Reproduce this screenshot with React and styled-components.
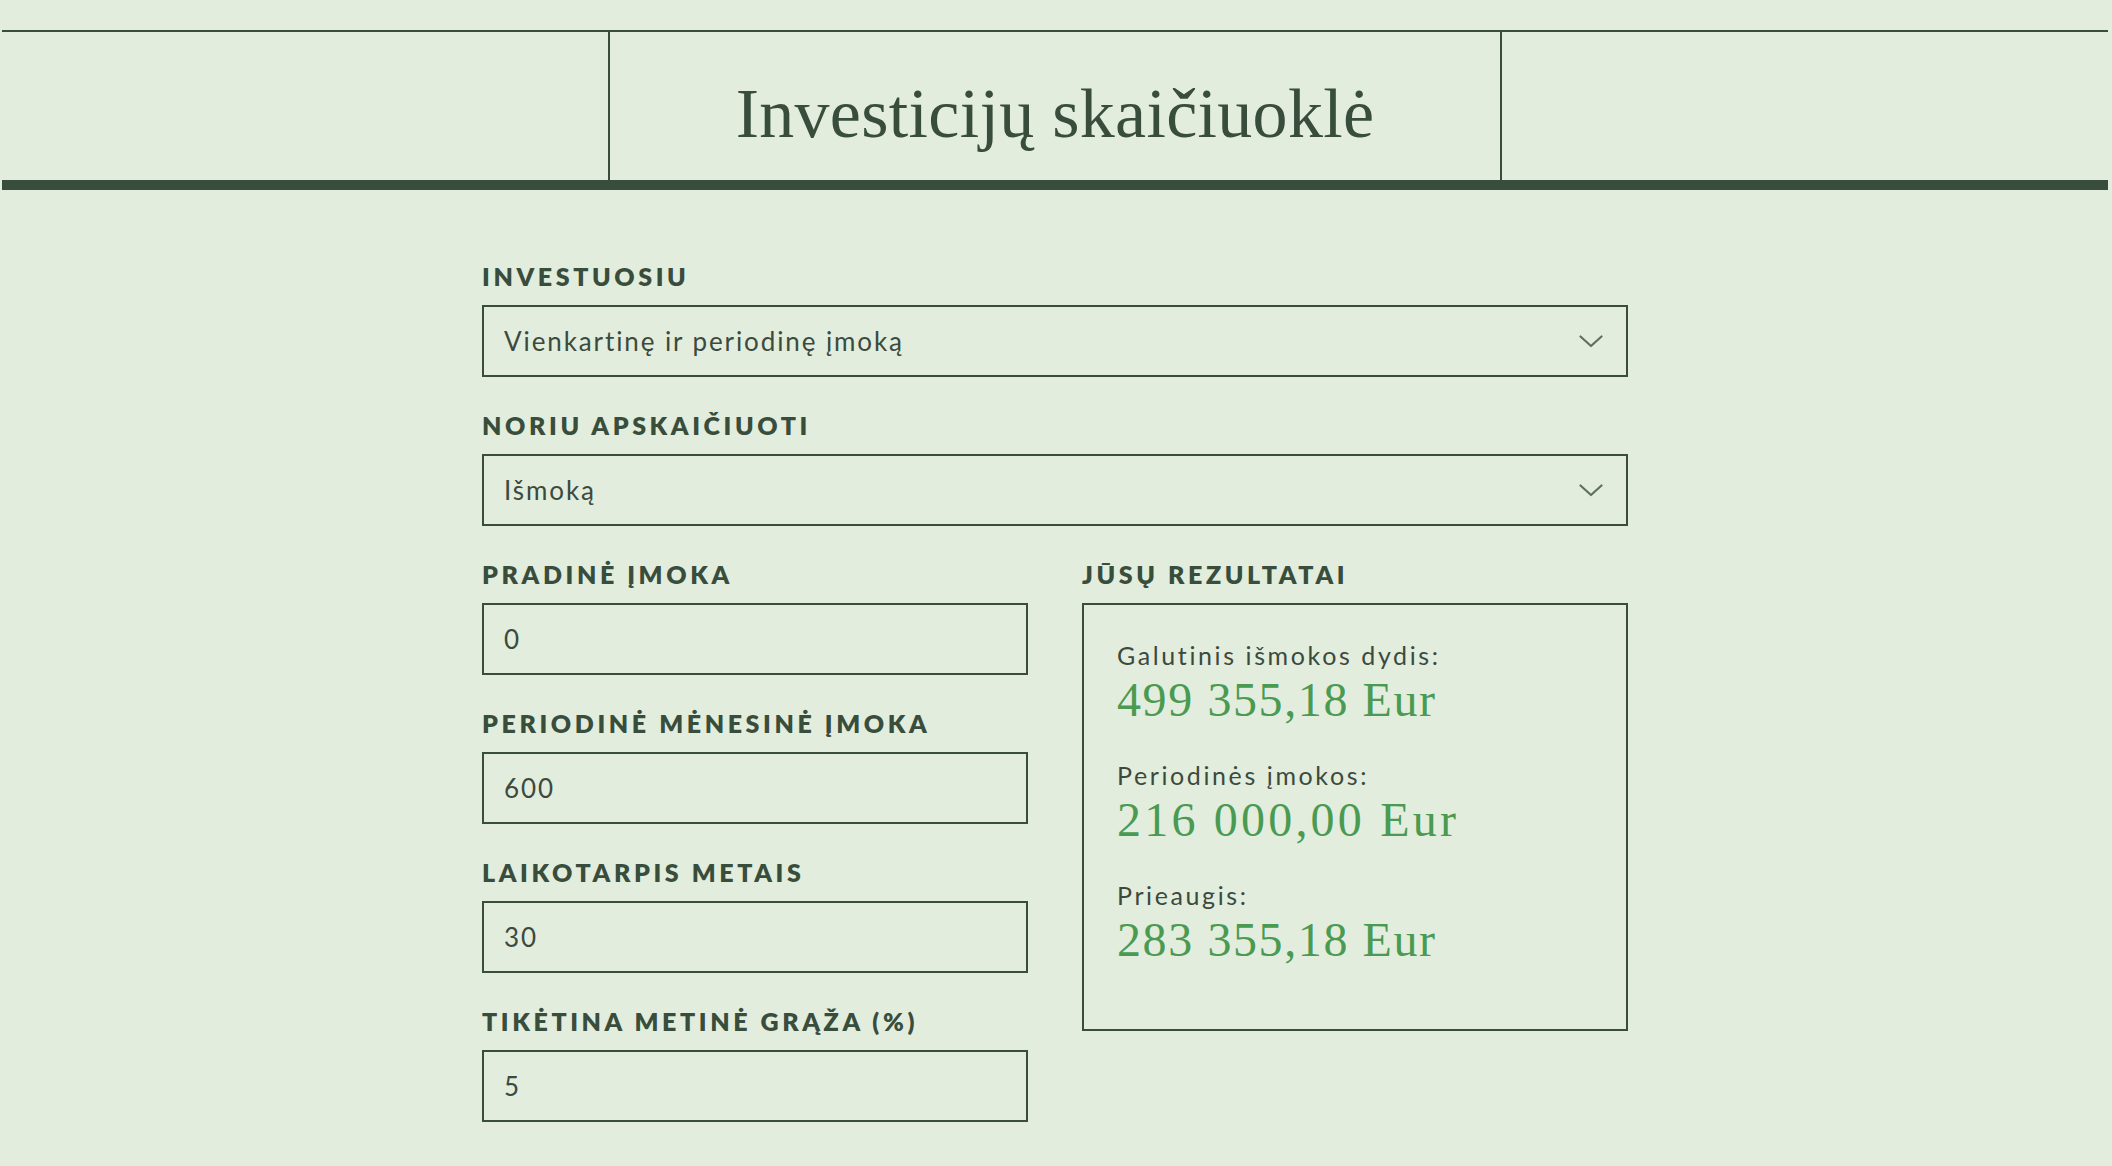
import React from "react";
import styled, { createGlobalStyle } from "styled-components";

const C = {
  bg: "#e2edde",
  dark: "#394d3c",
  text: "#3b4a3d",
  green: "#4a9a51",
  chevron: "#5f6f60",
};

const GlobalStyle = createGlobalStyle`
  html, body {
    margin: 0;
    padding: 0;
    background: ${C.bg};
  }
  body {
    font-family: Lato, "Open Sans", "DejaVu Sans", sans-serif;
    color: ${C.text};
  }
  * { box-sizing: border-box; }
`;

const Page = styled.div`
  padding: 30px 4px 60px 2px;
  min-height: 1166px;
`;

const Header = styled.header`
  display: grid;
  grid-template-columns: 1fr 894px 1fr;
  height: 160px;
  border-top: 2px solid ${C.dark};
  border-bottom: 10px solid ${C.dark};
`;

const HeaderSide = styled.div``;

const HeaderCenter = styled.div`
  border-left: 2px solid ${C.dark};
  border-right: 2px solid ${C.dark};
  display: flex;
  justify-content: center;
  align-items: flex-start;
  padding-top: 47px;
`;

const Title = styled.h1`
  margin: 0;
  font-family: "Liberation Serif", "DejaVu Serif", serif;
  font-weight: 400;
  font-size: 70px;
  line-height: 70px;
  color: ${C.dark};
  letter-spacing: 0.3px;
`;

const Form = styled.main`
  width: 1146px;
  margin: 74px auto 0;
  display: flex;
  flex-direction: column;
  gap: 36px;
`;

const Field = styled.div`
  display: flex;
  flex-direction: column;
`;

const Label = styled.label`
  font-family: Lato, "Open Sans", sans-serif;
  font-weight: 800;
  font-size: 25px;
  line-height: 25px;
  letter-spacing: 3.6px;
  text-transform: uppercase;
  color: ${C.dark};
  margin-bottom: 16px;
`;

const Box = styled.div`
  height: 72px;
  border: 2px solid ${C.dark};
  display: flex;
  align-items: center;
  justify-content: space-between;
  padding: 0 23px 0 20px;
  font-family: Lato, "Open Sans", sans-serif;
  font-weight: 400;
  font-size: 26px;
  letter-spacing: 1.9px;
  color: ${C.text};
`;

const Value = styled.span``;

const Chevron = () => (
  <svg width="24" height="13" viewBox="0 0 24 13" fill="none">
    <polyline
      points="1.5,1.5 12,11 22.5,1.5"
      stroke={C.chevron}
      strokeWidth="2.2"
      strokeLinecap="round"
      strokeLinejoin="round"
    />
  </svg>
);

const Columns = styled.div`
  display: grid;
  grid-template-columns: 546px 546px;
  column-gap: 54px;
  align-items: start;
`;

const Stack = styled.div`
  display: flex;
  flex-direction: column;
  gap: 36px;
`;

const ResultsBox = styled.div`
  height: 428px;
  border: 2px solid ${C.dark};
  padding: 38px 20px 0 33px;
  display: flex;
  flex-direction: column;
  gap: 39px;
`;

const ResultItem = styled.div`
  display: flex;
  flex-direction: column;
  gap: 8px;
`;

const ResultLabel = styled.div`
  font-family: Lato, "Open Sans", sans-serif;
  font-weight: 400;
  font-size: 25px;
  line-height: 25px;
  letter-spacing: 2.6px;
  color: ${C.text};
`;

const ResultValue = styled.div`
  font-family: "Liberation Serif", "DejaVu Serif", serif;
  font-size: 48px;
  line-height: 48px;
  letter-spacing: ${(p) => (p.$wide ? "3.2px" : "1.6px")};
  color: ${C.green};
  font-variant-numeric: oldstyle-nums;
`;

const selects = [
  { label: "Investuosiu", value: "Vienkartinę ir periodinę įmoką" },
  { label: "Noriu apskaičiuoti", value: "Išmoką" },
];

const inputs = [
  { label: "Pradinė įmoka", value: "0" },
  { label: "Periodinė mėnesinė įmoka", value: "600" },
  { label: "Laikotarpis metais", value: "30" },
  { label: "Tikėtina metinė grąža (%)", value: "5" },
];

const results = [
  { label: "Galutinis išmokos dydis:", value: "499 355,18 Eur" },
  { label: "Periodinės įmokos:", value: "216 000,00 Eur", wide: true },
  { label: "Prieaugis:", value: "283 355,18 Eur" },
];

export default function App() {
  return (
    <>
      <GlobalStyle />
      <Page>
        <Header>
          <HeaderSide />
          <HeaderCenter>
            <Title>Investicijų skaičiuoklė</Title>
          </HeaderCenter>
          <HeaderSide />
        </Header>
        <Form>
          {selects.map((s) => (
            <Field key={s.label}>
              <Label>{s.label}</Label>
              <Box>
                <Value>{s.value}</Value>
                <Chevron />
              </Box>
            </Field>
          ))}
          <Columns>
            <Stack>
              {inputs.map((i) => (
                <Field key={i.label}>
                  <Label>{i.label}</Label>
                  <Box>
                    <Value>{i.value}</Value>
                  </Box>
                </Field>
              ))}
            </Stack>
            <Field>
              <Label>Jūsų rezultatai</Label>
              <ResultsBox>
                {results.map((r) => (
                  <ResultItem key={r.label}>
                    <ResultLabel>{r.label}</ResultLabel>
                    <ResultValue $wide={r.wide}>{r.value}</ResultValue>
                  </ResultItem>
                ))}
              </ResultsBox>
            </Field>
          </Columns>
        </Form>
      </Page>
    </>
  );
}
